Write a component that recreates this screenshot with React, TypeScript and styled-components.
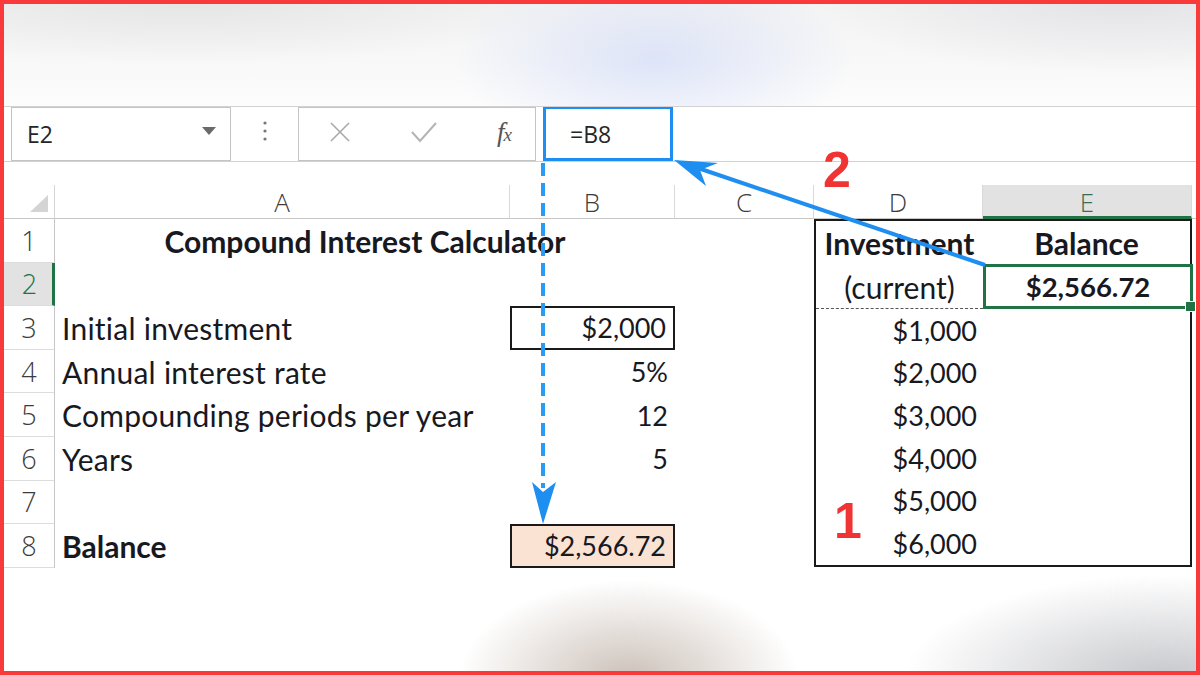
import React from 'react';
import styled, { createGlobalStyle } from 'styled-components';

const Global = createGlobalStyle`
  html, body { margin: 0; padding: 0; background: #fff; }
  body { font-family: Lato, "Liberation Sans", sans-serif; }
`;

const Page = styled.div`
  position: relative;
  width: 1200px;
  height: 675px;
  box-sizing: border-box;
  padding: 4px;
  background: #fa3a3a;
`;

const Frame = styled.div`
  width: 100%;
  height: 100%;
  background: #fff;
  display: flex;
  flex-direction: column;
  overflow: hidden;
`;

const TopBlur = styled.div`
  flex: none;
  height: 102px;
  background:
    radial-gradient(ellipse 200px 90px at 650px 55px, rgba(200, 212, 248, 0.55), rgba(200, 212, 248, 0) 100%),
    radial-gradient(ellipse 380px 60px at 180px 0px, rgba(226, 226, 226, 0.8), rgba(226, 226, 226, 0)),
    radial-gradient(ellipse 300px 70px at 1120px 0px, rgba(224, 224, 228, 0.8), rgba(224, 224, 228, 0)),
    linear-gradient(#f3f3f3, #fcfcfc);
`;

const FormulaBar = styled.div`
  flex: none;
  height: 56px;
  box-sizing: border-box;
  border-top: 1px solid #d2d2d2;
  border-bottom: 1px solid #d2d2d2;
  display: flex;
  align-items: stretch;
  padding-left: 7px;
  background: #fff;
`;

const NameBox = styled.div`
  width: 220px;
  box-sizing: border-box;
  border: 1px solid #c4c4c4;
  display: flex;
  align-items: center;
  justify-content: space-between;
  padding: 0 14px 0 15px;
  font-family: "Open Sans", sans-serif;
  font-size: 23px;
  color: #262626;
`;

const Caret = styled.span`
  width: 0;
  height: 0;
  border-left: 7px solid transparent;
  border-right: 7px solid transparent;
  border-top: 8px solid #6a6a6a;
  margin-top: -6px;
`;

const Dots = styled.div`
  width: 67px;
  display: flex;
  align-items: center;
  justify-content: center;
  padding-bottom: 6px;
`;

const FxBox = styled.div`
  width: 238px;
  box-sizing: border-box;
  border: 1px solid #c4c4c4;
  display: flex;
  align-items: center;
  justify-content: space-between;
  padding: 0 24px 4px 30px;
`;

const FxGlyph = styled.span`
  font-family: "Liberation Serif", "DejaVu Serif", serif;
  font-style: italic;
  color: #555;
  font-size: 27px;
  line-height: 1;
  letter-spacing: -1px;
  & > small {
    font-size: 19px;
  }
`;

const FormulaInput = styled.div`
  margin-left: 7px;
  width: 130px;
  box-sizing: border-box;
  border: 3px solid #1e8ff0;
  border-top-width: 2px;
  display: flex;
  align-items: center;
  padding: 0 0 0 24px;
  font-family: "Open Sans", sans-serif;
  font-size: 23px;
  color: #262626;
`;

const Gap = styled.div`
  flex: none;
  height: 23px;
`;

const Sheet = styled.div`
  flex: none;
  display: grid;
  grid-template-columns: 51px 455px 165px 139px 169px 209px 1fr;
  grid-template-rows: 34px repeat(8, 43.6px);
`;

const Corner = styled.div`
  position: relative;
  border-right: 1px solid #d6d6d6;
  border-bottom: 1px solid #c6c6c6;
  &::after {
    content: "";
    position: absolute;
    right: 6px;
    bottom: 6px;
    width: 18px;
    height: 17px;
    background: #d4d4d4;
    clip-path: polygon(100% 0, 100% 100%, 0 100%);
  }
`;

const ColHeader = styled.div<{ $selected?: boolean; $last?: boolean }>`
  display: flex;
  align-items: center;
  justify-content: center;
  box-sizing: border-box;
  border-right: ${(p) => (p.$last ? 'none' : '1px solid #d9d9d9')};
  border-bottom: ${(p) => (p.$selected ? '3px solid #217346' : '1px solid #c6c6c6')};
  background: ${(p) => (p.$selected ? '#e2e2e2' : '#fff')};
  color: ${(p) => (p.$selected ? '#3f6b55' : '#3c3c3c')};
  font-family: "Open Sans", sans-serif;
  font-weight: 300;
  font-size: 26px;
  padding-top: ${(p) => (p.$selected ? '2px' : '0')};
`;

const RowHeader = styled.div<{ $selected?: boolean }>`
  grid-column: 1;
  display: flex;
  align-items: center;
  justify-content: center;
  box-sizing: border-box;
  border-right: ${(p) => (p.$selected ? '3px solid #217346' : '1px solid #c6c6c6')};
  border-bottom: 1px solid #dcdcdc;
  background: ${(p) => (p.$selected ? '#e2e2e2' : '#fff')};
  color: ${(p) => (p.$selected ? '#217346' : '#3c3c3c')};
  font-family: "Open Sans", sans-serif;
  font-weight: 300;
  font-size: 27px;
  padding-left: ${(p) => (p.$selected ? '3px' : '0')};
`;

const Cell = styled.div<{
  $col: string;
  $align?: 'left' | 'right' | 'center';
  $bold?: boolean;
  $boxed?: boolean;
  $num?: boolean;
  $fill?: string;
}>`
  grid-column: ${(p) => p.$col};
  display: flex;
  align-items: center;
  justify-content: ${(p) =>
    p.$align === 'right' ? 'flex-end' : p.$align === 'center' ? 'center' : 'flex-start'};
  box-sizing: border-box;
  padding: 0 7px;
  font-size: ${(p) => (p.$num ? '27px' : '30px')};
  letter-spacing: ${(p) => (p.$num || p.$bold ? '0' : '0.25px')};
  font-weight: ${(p) => (p.$bold ? 700 : 400)};
  color: #18181f;
  white-space: nowrap;
  border: ${(p) => (p.$boxed ? '2px solid #1a1a1a' : 'none')};
  background: ${(p) => p.$fill || 'transparent'};
`;

const TableBox = styled.div`
  grid-column: 5 / 7;
  grid-row: 2 / 10;
  box-sizing: border-box;
  border: 2px solid #1a1a1a;
  display: grid;
  grid-template-columns: 167px 1fr;
  grid-template-rows: 44px 44px repeat(6, 1fr);
  margin-bottom: 1px;
`;

const TCell = styled.div<{ $align?: 'right' | 'center'; $bold?: boolean; $dotted?: boolean; $num?: boolean }>`
  display: flex;
  align-items: center;
  justify-content: ${(p) => (p.$align === 'right' ? 'flex-end' : 'center')};
  box-sizing: border-box;
  padding: 0 6px;
  font-size: ${(p) => (p.$num ? '27px' : '30px')};
  font-weight: ${(p) => (p.$bold ? 700 : 400)};
  color: #18181f;
  white-space: nowrap;
  border-bottom: ${(p) => (p.$dotted ? '1px dashed #555' : 'none')};
`;

const ActiveCell = styled.div`
  position: relative;
  display: flex;
  align-items: center;
  justify-content: center;
  box-sizing: border-box;
  margin: -1px -3px 0 0;
  border: 3px solid #217346;
  font-size: 27.5px;
  font-weight: 700;
  color: #18181f;
`;

const FillHandle = styled.span`
  position: absolute;
  right: -6px;
  bottom: -6px;
  width: 9px;
  height: 9px;
  background: #217346;
  border: 1px solid #fff;
`;

const BottomBlur = styled.div`
  flex: 1;
  background:
    radial-gradient(ellipse 170px 100px at 625px 112px, rgba(190, 176, 166, 0.8), rgba(200, 185, 175, 0) 100%),
    radial-gradient(ellipse 260px 105px at 1160px 112px, rgba(188, 189, 194, 0.85), rgba(190, 190, 196, 0) 100%),
    #fff;
`;

const Overlay = styled.svg`
  position: absolute;
  left: 0;
  top: 0;
  pointer-events: none;
`;

const Callout = styled.span<{ $x: number; $y: number }>`
  position: absolute;
  left: ${(p) => p.$x}px;
  top: ${(p) => p.$y}px;
  font-family: "Liberation Sans", Arial, sans-serif;
  font-weight: 700;
  font-size: 50px;
  line-height: 1;
  color: #f03434;
`;

const leftRows: Array<[string, string]> = [
  ['Initial investment', '$2,000'],
  ['Annual interest rate', '5%'],
  ['Compounding periods per year', '12'],
  ['Years', '5'],
];

const investments = ['$1,000', '$2,000', '$3,000', '$4,000', '$5,000', '$6,000'];

export default function App() {
  return (
    <>
      <Global />
      <Page>
        <Frame>
          <TopBlur />
          <FormulaBar>
            <NameBox>
              <span>E2</span>
              <Caret />
            </NameBox>
            <Dots>
              <svg width="6" height="22" viewBox="0 0 6 22">
                <circle cx="3" cy="3" r="1.6" fill="#777" />
                <circle cx="3" cy="11" r="1.6" fill="#777" />
                <circle cx="3" cy="19" r="1.6" fill="#777" />
              </svg>
            </Dots>
            <FxBox>
              <svg width="22" height="22" viewBox="0 0 22 22">
                <path d="M2 2 L20 20 M20 2 L2 20" stroke="#a9a9a9" strokeWidth="1.6" fill="none" />
              </svg>
              <svg width="28" height="24" viewBox="0 0 28 24">
                <path d="M2 12 L10 21 L26 3" stroke="#b3b3b3" strokeWidth="2" fill="none" />
              </svg>
              <FxGlyph>
                f<small>x</small>
              </FxGlyph>
            </FxBox>
            <FormulaInput>=B8</FormulaInput>
          </FormulaBar>
          <Gap />
          <Sheet>
            <Corner />
            <ColHeader>A</ColHeader>
            <ColHeader>B</ColHeader>
            <ColHeader>C</ColHeader>
            <ColHeader>D</ColHeader>
            <ColHeader $selected>E</ColHeader>
            <ColHeader $last />

            {[1, 2, 3, 4, 5, 6, 7, 8].map((n) => (
              <RowHeader key={n} $selected={n === 2} style={{ gridRow: n + 1 }}>
                {n}
              </RowHeader>
            ))}

            <Cell $col="2 / 4" $align="center" $bold style={{ gridRow: 2 }}>
              Compound Interest Calculator
            </Cell>
            {leftRows.map(([label, value], i) => (
              <React.Fragment key={label}>
                <Cell $col="2" style={{ gridRow: i + 4 }}>
                  {label}
                </Cell>
                <Cell $col="3" $align="right" $num $boxed={i === 0} style={{ gridRow: i + 4 }}>
                  {value}
                </Cell>
              </React.Fragment>
            ))}
            <Cell $col="2" $bold style={{ gridRow: 9 }}>
              Balance
            </Cell>
            <Cell $col="3" $align="right" $num $boxed $fill="#fbe3d4" style={{ gridRow: 9 }}>
              $2,566.72
            </Cell>

            <TableBox>
              <TCell $bold>Investment</TCell>
              <TCell $bold>Balance</TCell>
              <TCell $dotted>(current)</TCell>
              <ActiveCell>
                $2,566.72
                <FillHandle />
              </ActiveCell>
              {investments.map((v) => (
                <React.Fragment key={v}>
                  <TCell $align="right" $num>{v}</TCell>
                  <TCell />
                </React.Fragment>
              ))}
            </TableBox>
          </Sheet>
          <BottomBlur />
        </Frame>

        <Overlay width="1200" height="675" viewBox="0 0 1200 675">
          <line x1="543" y1="163" x2="543" y2="488" stroke="#2a9bf2" strokeWidth="4" strokeDasharray="13 7" />
          <path d="M532 482 L543 492 L556 482 L543 524 Z" fill="#1e8ef0" />
          <line x1="985" y1="265" x2="692" y2="166" stroke="#1e8ef0" strokeWidth="4" />
          <path d="M674 160 L718 163 L700 170 L706 186 Z" fill="#1e8ef0" />
        </Overlay>
        <Callout $x={823} $y={145}>2</Callout>
        <Callout $x={834} $y={496}>1</Callout>
      </Page>
    </>
  );
}
